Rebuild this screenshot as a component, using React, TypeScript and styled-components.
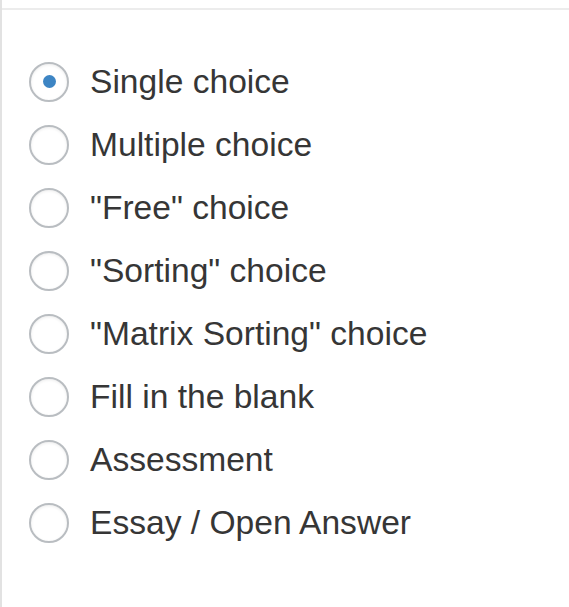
import React, { useState } from "react";
import styled, { createGlobalStyle } from "styled-components";

const GlobalStyle = createGlobalStyle`
  html, body {
    margin: 0;
    padding: 0;
    background: #ffffff;
  }
  body {
    font-family: "Liberation Sans", Arial, sans-serif;
  }
`;

const Page = styled.div`
  box-sizing: border-box;
  width: 569px;
  height: 607px;
  border-left: 2px solid #e2e2e2;
  padding-top: 8px;
`;

const Panel = styled.div`
  border-top: 2px solid #ececec;
  padding: 40px 0 0 27px;
`;

const OptionList = styled.div`
  display: flex;
  flex-direction: column;
`;

const OptionRow = styled.label`
  display: flex;
  align-items: center;
  height: 63px;
  gap: 21px;
  cursor: pointer;
`;

const Radio = styled.input.attrs({ type: "radio" })`
  appearance: none;
  -webkit-appearance: none;
  box-sizing: border-box;
  margin: 0;
  width: 40px;
  height: 40px;
  border-radius: 50%;
  border: 2px solid #b9bdc1;
  background: #ffffff;
  box-shadow: inset 0 1px 3px rgba(0, 0, 0, 0.08);
  display: flex;
  align-items: center;
  justify-content: center;
  flex-shrink: 0;

  &:checked::before {
    content: "";
    width: 13px;
    height: 13px;
    border-radius: 50%;
    background: #3d85c4;
  }
`;

const OptionText = styled.span`
  font-size: 33.6px;
  color: #363636;
  line-height: 1;
`;

const options = [
  "Single choice",
  "Multiple choice",
  "\"Free\" choice",
  "\"Sorting\" choice",
  "\"Matrix Sorting\" choice",
  "Fill in the blank",
  "Assessment",
  "Essay / Open Answer",
];

export default function App() {
  const [selected, setSelected] = useState(0);
  return (
    <>
      <GlobalStyle />
      <Page>
        <Panel>
          <OptionList>
            {options.map((label, i) => (
              <OptionRow key={label}>
                <Radio
                  name="answer-type"
                  checked={selected === i}
                  onChange={() => setSelected(i)}
                />
                <OptionText>{label}</OptionText>
              </OptionRow>
            ))}
          </OptionList>
        </Panel>
      </Page>
    </>
  );
}
